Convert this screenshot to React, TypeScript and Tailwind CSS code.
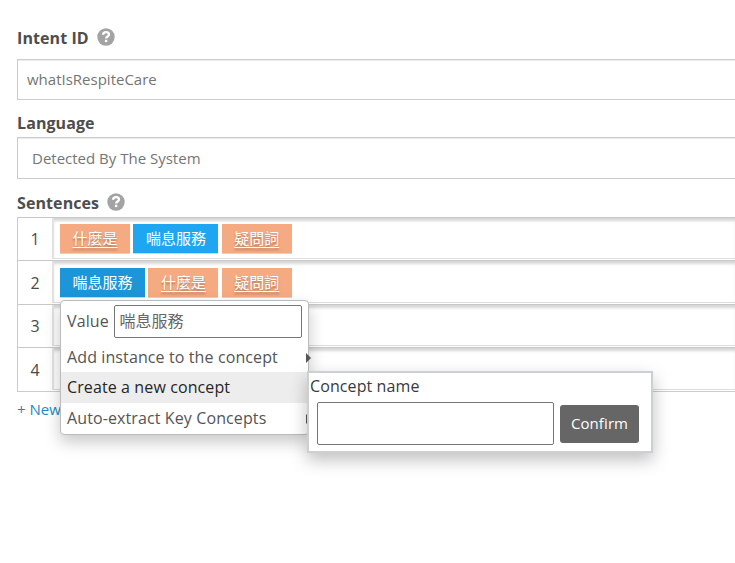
import React from "react";

type Chip = { text: string; kind: "concept" | "value" | "active" };

const chipStyles: Record<Chip["kind"], string> = {
  concept: "w-[70px] bg-[#f5aa82] underline [text-shadow:0_2px_2px_rgba(0,0,0,0.3)]",
  value: "w-[85px] bg-[#1ea7f0]",
  active: "w-[85px] bg-[#1c96d8]",
};

const rows: Chip[][] = [
  [
    { text: "什麼是", kind: "concept" },
    { text: "喘息服務", kind: "value" },
    { text: "疑問詞", kind: "concept" },
  ],
  [
    { text: "喘息服務", kind: "active" },
    { text: "什麼是", kind: "concept" },
    { text: "疑問詞", kind: "concept" },
  ],
  [{ text: "", kind: "active" }],
  [{ text: "", kind: "active" }],
];

const rowHeights = ["h-[43px]", "h-[44px]", "h-[43px]", "h-[44px]"];
const rowPadding = ["pt-[6px]", "pt-[7px]", "pt-[6px]", "pt-[7px]"];

function Help() {
  return (
    <svg className="-mt-[2px] block size-[18px]" viewBox="0 0 18 18" aria-hidden="true">
      <circle cx="9" cy="9" r="8.7" fill="#a3a3a3" />
      <path d="M5.9 6.8C6.2 5 7.4 4.2 9 4.2c1.8 0 3 .9 3 2.4 0 1.9-2.9 2-2.9 4" fill="none" stroke="#fff" strokeWidth="2.3" />
      <rect x="7.9" y="11.8" width="2.4" height="2.3" fill="#fff" />
    </svg>
  );
}

function Heading({ text, help }: { text: string; help?: boolean }) {
  return (
    <div className="flex h-[22px] items-center gap-2 text-base leading-[22px] font-bold tracking-[0.09px] text-[#4d4d4d]">
      <span>{text}</span>
      {help && <Help />}
    </div>
  );
}

function ChipTag({ chip }: { chip: Chip }) {
  return (
    <span
      className={`flex h-[29px] items-center justify-center text-[15px] leading-[29px] text-white shadow-[0_1px_0_#d5d5d5] underline-offset-[3px] ${chipStyles[chip.kind]}`}
    >
      {chip.text}
    </span>
  );
}

function MenuItem({ text, active, arrow }: { text: string; active?: boolean; arrow?: boolean }) {
  return (
    <div
      className={`relative flex items-center pl-1.5 text-base tracking-[0.11px] ${active ? "h-[31px] bg-[#ededed] pb-[2px] text-[#262626]" : "h-[30px] text-[#555]"}`}
    >
      {text}
      {arrow && (
        <span className="absolute top-[11px] -right-[3px] border-y-[5px] border-l-[5px] border-y-transparent border-l-[#555]" />
      )}
    </div>
  );
}

function ContextMenu() {
  return (
    <div className="absolute top-[300px] left-[60px] h-[135px] w-[249px] rounded-[4px] border border-[#bbb] bg-white shadow-[0_7px_16px_rgba(0,0,0,0.22)]">
      <div className="flex h-[41px] items-start pt-1 pl-1.5 text-base text-[#555]">
        <span className="w-[47px] leading-8 tracking-[0.11px]">Value</span>
        <input
          className="h-[33px] w-[188px] rounded-[2px] border border-[#767676] bg-white px-[4.5px] pb-[3px] text-base text-[#666] outline-none"
          defaultValue="喘息服務"
        />
      </div>
      <MenuItem text="Add instance to the concept" arrow />
      <MenuItem text="Create a new concept" active />
      <MenuItem text="Auto-extract Key Concepts" arrow />
    </div>
  );
}

function ConceptPopup() {
  return (
    <div className="absolute top-[371px] left-[307px] h-[82px] w-[346px] border-2 border-[#ccd0d0] bg-white shadow-[0_7px_16px_rgba(0,0,0,0.25)]">
      <div className="h-[29px] pl-[1px] text-base leading-[27px] tracking-[0.1px] text-[#373a3c]">Concept name</div>
      <div className="flex items-center gap-1.5 pl-2">
        <input className="h-[43px] w-[237px] rounded-[2px] border border-[#767676] bg-white outline-none" />
        <button className="h-[38px] w-[79px] rounded-[3px] bg-[#666] text-[15px] tracking-[0.1px] text-white">Confirm</button>
      </div>
    </div>
  );
}

export default function App() {
  return (
    <main className="relative h-[563px] w-full overflow-hidden bg-white pt-[27px] pl-[17px] font-['Open_Sans','Noto_Sans_CJK_TC',sans-serif]">
      <Heading text="Intent ID" help />
      <div className="mt-[10px] flex h-[41px] items-center border border-r-0 border-[#ccc] pl-[9px] text-[15px] text-[#757575] shadow-[inset_0_2px_1px_-1px_rgba(0,0,0,0.08)]">
        whatIsRespiteCare
      </div>
      <div className="mt-3">
        <Heading text="Language" />
      </div>
      <div className="mt-[3px] flex h-[42px] items-center border border-r-0 border-[#ccc] pl-[14px] text-[15px] text-[#757575] shadow-[inset_0_2px_1px_-1px_rgba(0,0,0,0.08)]">
        Detected By The System
      </div>
      <div className="mt-[13px]">
        <Heading text="Sentences" help />
      </div>
      <div className="mt-[3px] border-b border-l border-[#ccc]">
        {rows.map((chips, i) => (
          <div key={i} className={`flex border-t border-[#c8c8c8] ${rowHeights[i]}`}>
            <div className="flex w-[34px] items-center justify-center text-base text-[#4a4a4a]">{i + 1}</div>
            <div
              className={`mb-[1px] flex flex-1 gap-[3.4px] border-b border-l-2 border-b-[#ddd] border-l-[#e2e2e2] pl-[6px] shadow-[inset_0_4px_3px_-1px_rgba(0,0,0,0.16)] ${rowPadding[i]}`}
            >
              {chips.map((chip, j) => (
                <ChipTag key={j} chip={chip} />
              ))}
            </div>
          </div>
        ))}
      </div>
      <div className="mt-[6px] text-[15px] leading-[22px] text-[#1c8bbf]">+ New</div>
      <ContextMenu />
      <ConceptPopup />
    </main>
  );
}
